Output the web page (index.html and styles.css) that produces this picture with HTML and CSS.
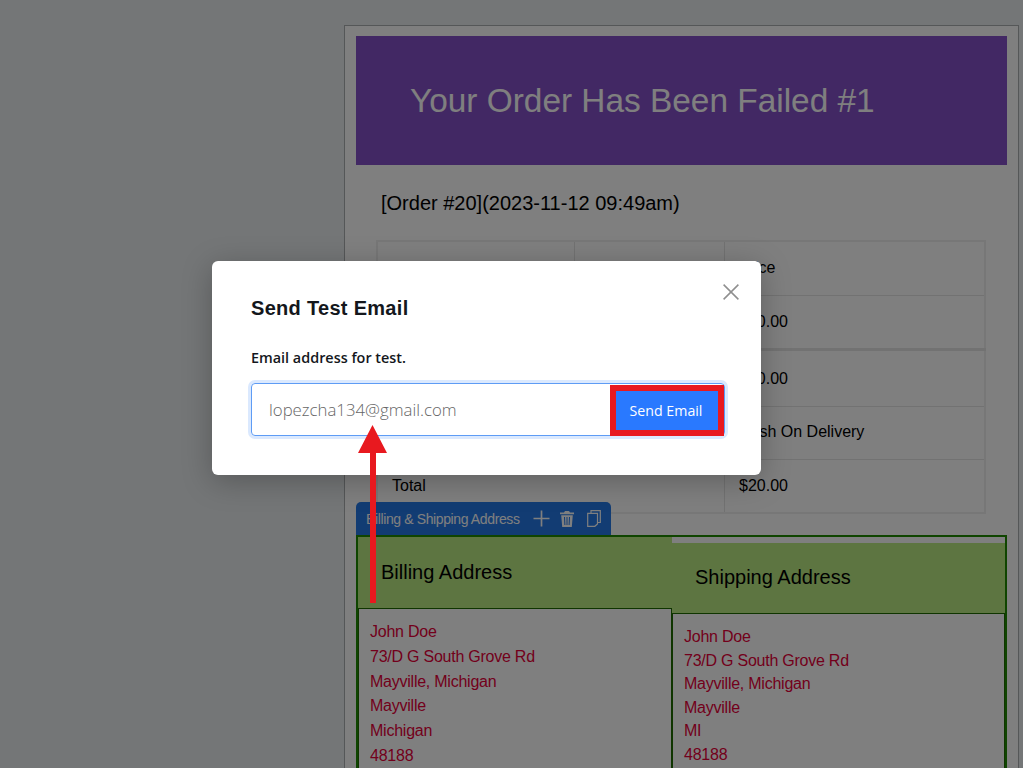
FILE: index.html
```html
<!DOCTYPE html>
<html lang="en">
<head>
  <meta charset="UTF-8" />
  <meta name="viewport" content="width=device-width, initial-scale=1.0"/>
  <title>Send Test Email</title>
  <link rel="stylesheet" href="styles.css">
</head>
<body>

  <div class="page">
    <div class="sidebar"></div>

    <!-- Email preview -->
    <div class="preview">
      <div class="email-head">
        <h1>Your Order Has Been Failed #1</h1>
      </div>
      <h2 class="order-title">[Order #20](2023-11-12 09:49am)</h2>

      <table class="order-table">
        <tr><td>Product</td><td>Quantity</td><td>Price</td></tr>
        <tr><td>Happy Ninja</td><td>1</td><td>$20.00</td></tr>
        <tr class="gap"><td colspan="2">Subtotal:</td><td>$20.00</td></tr>
        <tr class="short"><td colspan="2">Payment method:</td><td>Cash On Delivery</td></tr>
        <tr><td colspan="2">Total</td><td>$20.00</td></tr>
      </table>

      <!-- Address block -->
      <div class="block-wrap">
        <div class="block-bar">
          <span>Billing &amp; Shipping Address</span>
          <svg class="bar-plus" width="17" height="17" viewBox="0 0 17 17" fill="none" stroke="currentColor" stroke-width="1.700"><path d="M8.500 .5v16M.5 8.500h16"/></svg>
          <svg class="bar-trash" width="14" height="16" viewBox="0 0 14 16" fill="currentColor"><path d="M5 0h4l1 1.600h4V3.200H0V1.600h4z"/><path fill-rule="evenodd" d="M1.200 4.200h11.600L11.800 16H2.200zM4 6l.4 8h1L5 6zM6.500 6v8h1V6zM9 6l-.4 8h1L10 6z"/></svg>
          <svg class="bar-copy" width="14" height="17" viewBox="0 0 14 17" fill="none" stroke="currentColor" stroke-width="1.200"><path d="M4 3V.7h9.300v11.800H10.600"/><path d="M.7 3.400h9.800v10.600L7.800 16.300H.7z"/></svg>
        </div>
        <div class="address-row">
          <div class="address billing">
            <h3>Billing Address</h3>
            <div class="address-body">
              <p>John Doe</p>
              <p>73/D G South Grove Rd</p>
              <p>Mayville, Michigan</p>
              <p>Mayville</p>
              <p>Michigan</p>
              <p>48188</p>
            </div>
          </div>
          <div class="address shipping">
            <h3>Shipping Address</h3>
            <div class="address-body">
              <p>John Doe</p>
              <p>73/D G South Grove Rd</p>
              <p>Mayville, Michigan</p>
              <p>Mayville</p>
              <p>MI</p>
              <p>48188</p>
            </div>
          </div>
        </div>
      </div>
    </div>
  </div>

  <!-- Send test email dialog -->
  <div class="overlay">
    <div class="modal">
      <svg class="modal-close" width="16" height="16" viewBox="0 0 16 16" fill="none" stroke="#8f8f8f" stroke-width="1.500"><path d="M.6.6l14.800 14.800M15.400.6L.6 15.400"/></svg>
      <h2 class="modal-title">Send Test Email</h2>
      <label class="modal-label">Email address for test.</label>
      <div class="email-field">
        <span class="email-value">lopezcha134@gmail.com</span>
        <div class="send-frame"><button class="send-btn">Send Email</button></div>
      </div>
    </div>
  </div>

  <!-- Annotation arrow -->
  <svg class="arrow" width="30" height="179" viewBox="0 0 30 179" fill="#e8191f"><path d="M14.500 0L29 28H18V178H12V28H0z"/></svg>

</body>
</html>
```

FILE: styles.css
```css
html, body { margin: 0; height: 100%; overflow: hidden; }
body { font-family: "Liberation Sans", Arial, sans-serif; background: #e8ecef; }

.page { display: flex; height: 768px; overflow: hidden; }
.sidebar { width: 344px; flex: none; }

.preview {
  width: 675px;
  flex: none;
  margin: 25px 0 0;
  padding: 10px 11px 0 11px;
  border: 1px solid #aaaeb0;
  box-sizing: border-box;
  height: 900px;
  background: #fff;
}

.email-head {
  height: 129px;
  background: #8450c8;
  display: flex;
  align-items: center;
  padding-left: 54px;
}
.email-head h1 {
  margin: 0;
  color: #fff;
  font-size: 33.400px;
  font-weight: 400;
}

.order-title {
  margin: 26px 0 0 25px;
  font-size: 20px;
  line-height: 25px;
  font-weight: 400;
  color: #000;
}

.order-table {
  width: 610px;
  margin: 24px 0 0 20px;
  border-collapse: collapse;
  border: 2px solid #eee;
  font-size: 16px;
  color: #000;
}
.order-table td {
  height: 54px;
  padding: 0 14px;
  border: 1px solid #e5e5e5;
  box-sizing: border-box;
}
.order-table td:first-child { width: 198px; }
.order-table tr td:last-child { width: 261px; }
.order-table tr:first-child td:nth-child(2) { width: 150px; }
.order-table .gap td { border-top-width: 3px; height: 57px; padding-top: 2px; }
.order-table .short td { height: 53px; padding-bottom: 2px; }

.block-wrap { margin-top: -12px; }
.block-bar {
  width: 255px;
  height: 33px;
  box-sizing: border-box;
  background: #2478e6;
  border-radius: 5px 5px 0 0;
  display: flex;
  align-items: center;
  padding-left: 10px;
  color: #fff;
  font-size: 14px;
  letter-spacing: -0.380px;
}
.block-bar span { white-space: nowrap; }
.bar-plus { margin-left: 13px; flex: none; }
.bar-trash { margin-left: 10px; flex: none; }
.bar-copy { margin-left: 13px; flex: none; }

.address-row {
  display: flex;
  border: 2px solid #1f8a00;
  border-bottom: 0;
}
.address { width: 314px; flex: none; }
.address.shipping { width: 333px; padding-top: 6px; }
.address h3 {
  margin: 0;
  height: 71px;
  box-sizing: border-box;
  background: #baea82;
  display: flex;
  align-items: center;
  padding-left: 23px;
  font-size: 20px;
  font-weight: 400;
  color: #000;
}
.address.shipping h3 { height: 70px; padding-bottom: 2px; }
.address-body {
  height: 400px;
  padding: 11px 11px 10px;
  border: 1px solid #1f6a00;
  font-size: 16px;
  letter-spacing: -0.240px;
  color: #e60038;
}
.billing .address-body p { margin: 0; line-height: 24.800px; }
.shipping .address-body p { margin: 0; line-height: 23.600px; }

.overlay {
  position: absolute;
  inset: 0;
  background: rgba(0, 0, 0, 0.5);
  padding: 261px 0 0 212px;
}
.modal {
  position: relative;
  width: 549px;
  height: 214px;
  box-sizing: border-box;
  padding: 35px 36px 0 39px;
  background: #fff;
  border-radius: 6px;
  box-shadow: 0 6px 30px rgba(0, 0, 0, 0.25);
}
.modal-close { position: absolute; top: 23px; right: 22px; }
.modal-title {
  margin: 0;
  font-size: 20px;
  line-height: 25px;
  font-weight: 700;
  letter-spacing: 0.300px;
  color: #14171c;
}
.modal-label {
  display: block;
  margin-top: 27px;
  font-family: "Open Sans", sans-serif;
  font-size: 14.400px;
  line-height: 20px;
  font-weight: 600;
  color: #14171c;
}
.email-field {
  display: flex;
  align-items: center;
  justify-content: space-between;
  height: 53px;
  margin-top: 15px;
  box-sizing: border-box;
  border: 1px solid #5e9cf5;
  border-radius: 4px;
  box-shadow: 0 0 0 3px #dbe9fe;
}
.email-value {
  padding-left: 17px;
  font-family: "Open Sans", sans-serif;
  font-size: 16.800px;
  font-weight: 300;
  color: #666;
}
.send-frame {
  width: 114px;
  height: 51px;
  margin: 1px 0 0;
  box-sizing: border-box;
  border: 6px solid #e8191f;
  flex: none;
}
.send-btn {
  display: block;
  width: 100%;
  height: 100%;
  padding: 0 2px 0 0;
  border: 0;
  background: #2979ff;
  color: #fff;
  font-family: "Open Sans", sans-serif;
  font-size: 14.200px;
}

.arrow { position: absolute; left: 358px; top: 425px; }
```
